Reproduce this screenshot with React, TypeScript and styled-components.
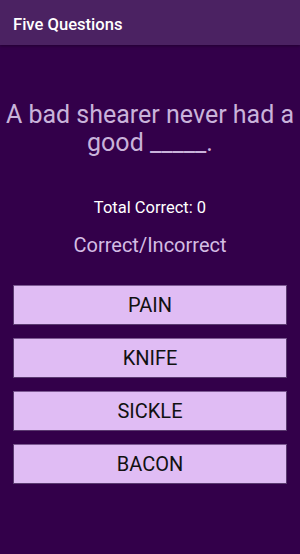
import styled, { createGlobalStyle } from "styled-components";

const Global = createGlobalStyle`
  html, body {
    margin: 0;
    padding: 0;
    background: #33004a;
  }
  * {
    box-sizing: border-box;
  }
`;

const SScreen = styled.div`
  width: 300px;
  height: 554px;
  background: #33004a;
  font-family: Roboto, "Liberation Sans", sans-serif;
  display: flex;
  flex-direction: column;
  overflow: hidden;
`;

const SBar = styled.header`
  height: 45px;
  background: #4b2262;
  display: flex;
  align-items: center;
  padding: 3px 13px 0;
  box-shadow: 0 1px 3px rgba(0, 0, 0, 0.35);

  h1 {
    margin: 0;
    font-size: 16.6px;
    font-weight: 500;
    color: #ffffff;
  }
`;

const SBody = styled.main`
  display: flex;
  flex-direction: column;
  align-items: center;
  padding: 56px 13px 0;
`;

const SQuestion = styled.p`
  margin: 0 -11px;
  font-size: 25px;
  line-height: 28px;
  text-align: center;
  color: #c9b3da;
`;

const SScore = styled.p`
  margin: 41px 0 0;
  font-size: 16.5px;
  line-height: 20px;
  color: #ffffff;
`;

const SResult = styled.p`
  margin: 14px 0 0;
  font-size: 20px;
  line-height: 26px;
  color: #d4bde4;
`;

const SAnswers = styled.div`
  width: 100%;
  display: flex;
  flex-direction: column;
  gap: 13px;
  margin-top: 27px;
`;

const SAnswer = styled.button`
  height: 40px;
  width: 100%;
  background: #e0bcf4;
  border: 1px solid #5b3a70;
  border-top-color: #7d5a93;
  border-radius: 0;
  font-family: Roboto, "Liberation Sans", sans-serif;
  font-size: 20px;
  color: #111111;
  cursor: pointer;
  padding: 0;
`;

const answers = ["PAIN", "KNIFE", "SICKLE", "BACON"];

function App() {
  return (
    <SScreen>
      <Global />
      <SBar>
        <h1>Five Questions</h1>
      </SBar>
      <SBody>
        <SQuestion>A bad shearer never had a good _____.</SQuestion>
        <SScore>Total Correct: 0</SScore>
        <SResult>Correct/Incorrect</SResult>
        <SAnswers>
          {answers.map((a) => (
            <SAnswer key={a}>{a}</SAnswer>
          ))}
        </SAnswers>
      </SBody>
    </SScreen>
  );
}

export default App;
